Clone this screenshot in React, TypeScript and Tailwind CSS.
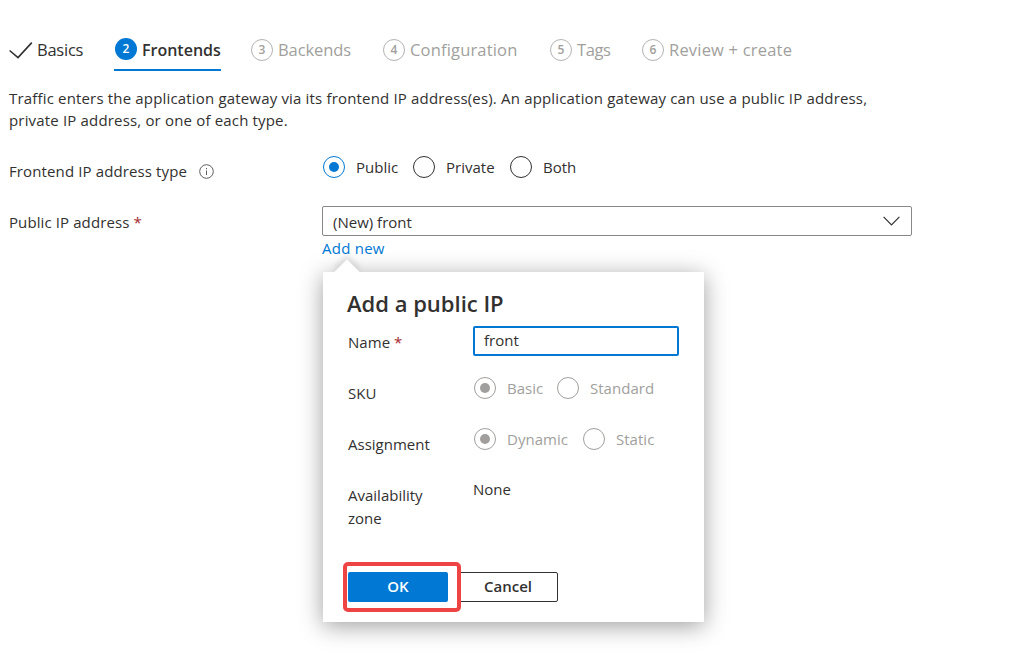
const font = "font-['Open_Sans','Noto_Sans',sans-serif]";

const pendingTabs = [
  { n: 3, label: "Backends", width: "w-[100px]", tracking: "tracking-[-0.1px]" },
  { n: 4, label: "Configuration", width: "w-[135px]", tracking: "tracking-[0.17px]" },
  { n: 5, label: "Tags", width: "w-[60px]", tracking: "tracking-[-0.4px]" },
  { n: 6, label: "Review + create", width: "w-[150px]", tracking: "tracking-[0.2px]" },
];

function Radio({ label, checked, disabled, className }: { label: string; checked?: boolean; disabled?: boolean; className: string }) {
  return (
    <div className={`flex items-center ${className}`}>
      <span
        className={`flex h-[22px] w-[22px] shrink-0 items-center justify-center rounded-full border ${
          disabled ? "border-[#a19f9d]" : checked ? "border-[#0078d4]" : "border-[#323130]"
        }`}
      >
        {checked && <span className={`h-[10px] w-[10px] rounded-full ${disabled ? "bg-[#a19f9d]" : "bg-[#0078d4]"}`} />}
      </span>
      <span className={`ml-[11px] whitespace-nowrap text-[15px] tracking-[0.02px] ${disabled ? "text-[#a19f9d]" : "text-[#323130]"}`}>
        {label}
      </span>
    </div>
  );
}

function PublicIpPopover() {
  return (
    <div className="absolute left-[323px] top-[272px] h-[350px] w-[381px] bg-white shadow-[0_4px_22px_rgba(0,0,0,0.38)]">
      {/* caret */}
      <div className="absolute left-[15px] top-[-9px] h-[18px] w-[18px] rotate-45 bg-white shadow-[-3px_-3px_6px_rgba(0,0,0,0.12)]" />
      <div className="relative flex h-full flex-col bg-white pl-[25px] pt-[16px]">
        <h2 className="ml-[-1px] text-[22px] font-semibold leading-[30px] text-[#323130]">Add a public IP</h2>

        <div className="mt-[8px] flex h-[51px]">
          <div className="w-[125px] pt-[5px] text-[15px] leading-[22px] tracking-[0.05px] text-[#323130]">
            Name <span className="text-[#a4262c]">*</span>
          </div>
          <div className="flex h-[30px] w-[206px] items-center rounded-[2px] border-2 border-[#0078d4] pb-[2px] pl-[9px] text-[15px] text-[#323130]">
            front
          </div>
        </div>

        <div className="flex h-[51px]">
          <div className="w-[126px] pt-[5px] text-[15px] leading-[22px] text-[#323130]">SKU</div>
          <div className="flex h-[22px]">
            <Radio label="Basic" checked disabled className="w-[83px]" />
            <Radio label="Standard" disabled className="" />
          </div>
        </div>

        <div className="flex h-[51px]">
          <div className="w-[126px] pt-[5px] text-[15px] leading-[22px] text-[#323130]">Assignment</div>
          <div className="flex h-[22px]">
            <Radio label="Dynamic" checked disabled className="w-[109px]" />
            <Radio label="Static" disabled className="" />
          </div>
        </div>

        <div className="flex">
          <div className="w-[125px] pt-[5px] text-[15px] leading-[23px] text-[#323130]">
            Availability
            <br />
            zone
          </div>
          <div className="text-[15px] leading-[20px] text-[#323130]">None</div>
        </div>

        <div className="mt-[42px] flex">
          <button className="relative h-[30px] w-[100px] rounded-[2px] bg-[#0078d4] pb-[2px] text-[15px] font-semibold text-white">
            OK
            <span className="absolute left-[-5px] top-[-10px] h-[50px] w-[118px] rounded-[5px] border-4 border-[#ef4444]" />
          </button>
          <button className="ml-[10px] h-[30px] w-[100px] rounded-[2px] border border-[#323130] bg-white pb-[2px] text-[15px] font-semibold text-[#323130]">
            Cancel
          </button>
        </div>
      </div>
    </div>
  );
}

export default function App() {
  return (
    <div className={`relative h-[662px] w-[1015px] overflow-hidden bg-white ${font}`}>
      {/* Wizard tabs */}
      <nav className="flex h-[71px] items-start pl-[9px] pt-[29px] text-[16.5px]">
        <div className="flex h-[42px] w-[105px] items-center text-[#323130]">
          <svg className="h-[17px] w-[24px] shrink-0" viewBox="0 0 24 17" fill="none" stroke="#323130" strokeWidth="1.6">
            <path d="M0.6 8.5 L9 15.6 L22.8 0.6" />
          </svg>
          <span className="ml-[4px] tracking-[-0.23px]">Basics</span>
        </div>
        <div className="flex h-[42px] w-[107px] items-center border-b-[2px] border-[#0078d4]">
          <span className="ml-[1px] flex h-[22px] w-[22px] shrink-0 items-center justify-center rounded-full bg-[#0078d4] text-[12px] font-semibold text-white">
            2
          </span>
          <span className="ml-[5px] whitespace-nowrap pt-[1px] text-[16px] font-semibold text-[#323130]">Frontends</span>
        </div>
        <div className="ml-[30px] flex">
          {pendingTabs.map((tab) => (
            <div key={tab.n} className={`mr-[32px] flex h-[42px] items-center whitespace-nowrap text-[#a19f9d] ${tab.width}`}>
              <span className="flex h-[22px] w-[22px] shrink-0 items-center justify-center rounded-full border-[1.5px] border-[#b5b3b1] text-[12px] font-semibold">
                {tab.n}
              </span>
              <span className={`ml-[5px] ${tab.tracking}`}>{tab.label}</span>
            </div>
          ))}
        </div>
      </nav>

      <p className="mt-[16px] whitespace-nowrap pl-[9px] text-[15px] leading-[22px] tracking-[0.17px] text-[#323130]">
        Traffic enters the application gateway via its frontend IP address(es). An application gateway can use a public IP address,
        <br />
        private IP address, or one of each type.
      </p>

      {/* Frontend form */}
      <div className="mt-[25px] flex h-[50px] pl-[9px]">
        <div className="flex h-[22px] w-[314px] translate-y-[4px] items-center text-[15px] tracking-[0.12px] text-[#323130]">
          Frontend IP address type
          <svg className="ml-[12px] h-[15px] w-[15px]" viewBox="0 0 15 15" fill="none" stroke="#605e5c">
            <circle cx="7.5" cy="7.5" r="6.8" />
            <path d="M7.5 6.5v4.5M7.5 4v1.2" />
          </svg>
        </div>
        <div className="flex h-[22px]">
          <Radio label="Public" checked className="w-[90px]" />
          <Radio label="Private" className="w-[97px]" />
          <Radio label="Both" className="" />
        </div>
      </div>

      <div className="flex pl-[9px]">
        <div className="w-[313px] pt-[5px] text-[15px] leading-[22px] tracking-[0.1px] text-[#323130]">
          Public IP address <span className="text-[#a4262c]">*</span>
        </div>
        <div className="w-[590px]">
          <div className="flex h-[30px] items-center justify-between rounded-[2px] border border-[#8a8886] pl-[10px] pr-[11px] text-[15px] text-[#323130]">
            <span className="pt-[2px]">(New) front</span>
            <svg className="h-[10px] w-[17px]" viewBox="0 0 17 10" fill="none" stroke="#323130" strokeWidth="1.2">
              <path d="M0.6 0.8 L8.5 8.8 L16.4 0.8" />
            </svg>
          </div>
          <a className="block text-[15px] leading-[24px] tracking-[0.25px] text-[#0078d4]">Add new</a>
        </div>
      </div>

      <PublicIpPopover />
    </div>
  );
}
